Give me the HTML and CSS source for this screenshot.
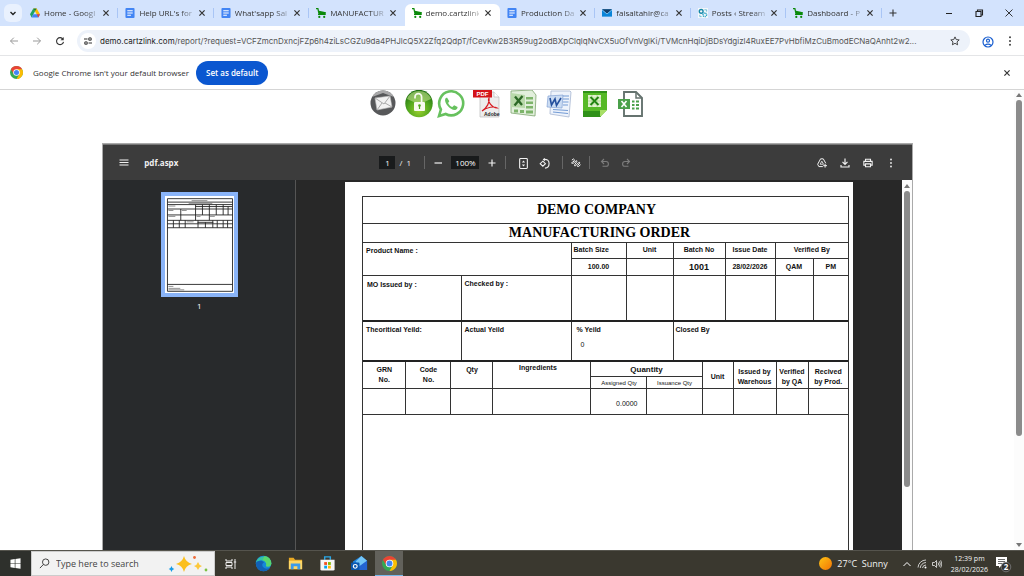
FILE: index.html
```html
<!DOCTYPE html>
<html lang="en">
<head>
<meta charset="utf-8">
<title>demo.cartzlink.com</title>
<link rel="stylesheet" href="styles.css">
</head>
<body>
<svg class="defs" aria-hidden="true">
  <symbol id="close" viewBox="0 0 10 10"><path d="M2.400 2.400l5.200 5.200M7.600 2.400L2.400 7.600" fill="none" stroke="currentColor" stroke-width="1.200"/></symbol>
  <symbol id="doc" viewBox="0 0 10 11"><rect width="10" height="11" rx="1" fill="#4285f4"/><path d="M2 3h6M2 5.500h6M2 8h4" stroke="#fff" stroke-width="1.200"/></symbol>
  <symbol id="cart" viewBox="0 0 10 10"><path d="M0 0h2.400l.6 2.800L10 4.200 9.400 7H2.600L1.400 1.300H0z" fill="#0b8a0b"/><path d="M2 6.500h7.500" stroke="#0b8a0b" stroke-width="1"/><circle cx="3.300" cy="8.900" r="1.100" fill="#0b8a0b"/><circle cx="8.200" cy="8.900" r="1.100" fill="#0b8a0b"/></symbol>
  <symbol id="chrome" viewBox="0 0 20 20"><circle cx="10" cy="10" r="10" fill="#34a853"/><path d="M1.340 5A10 10 0 0 1 18.660 5L10 10z" fill="#ea4335"/><path d="M1.340 5L6 13l4-3 8-5H10z" fill="#ea4335"/><path d="M18.660 5A10 10 0 0 1 10 20l4.300-7.500L10 5z" fill="#fbbc04"/><circle cx="10" cy="10" r="5" fill="#fff"/><circle cx="10" cy="10" r="3.900" fill="#4285f4"/></symbol>
</svg>

<header class="browser">
  <div class="tabstrip">
    <button class="tab-search" aria-label="Search tabs"><svg viewBox="0 0 10 10"><path d="M2.500 4L5 6.500 7.500 4" fill="none" stroke="#222" stroke-width="1.400"/></svg></button>
    <nav class="tabs" aria-label="Tabs">
      <div class="tab"><svg class="favicon" viewBox="0 0 12 11"><path d="M4 0h4l4 7H8z" fill="#fbbc04"/><path d="M4 0l2 3.500L2 11 0 7z" fill="#1fa463"/><path d="M3.800 7H12l-2 4H2z" fill="#4285f4"/><path d="M4 0h4L6 3.500z" fill="#188038"/><path d="M8 7h4l-2 4z" fill="#ea4335"/></svg><span class="tab-title">Home - Googl</span><button class="tab-close" aria-label="Close"><svg><use href="#close"/></svg></button></div>
      <div class="tab"><svg class="favicon"><use href="#doc"/></svg><span class="tab-title">Help URL's for</span><button class="tab-close" aria-label="Close"><svg><use href="#close"/></svg></button></div>
      <div class="tab"><svg class="favicon"><use href="#doc"/></svg><span class="tab-title">What'sapp Sal</span><button class="tab-close" aria-label="Close"><svg><use href="#close"/></svg></button></div>
      <div class="tab"><svg class="favicon"><use href="#cart"/></svg><span class="tab-title">MANUFACTUR</span><button class="tab-close" aria-label="Close"><svg><use href="#close"/></svg></button></div>
      <div class="tab tab-active"><svg class="favicon"><use href="#cart"/></svg><span class="tab-title">demo.cartzlink</span><button class="tab-close" aria-label="Close"><svg><use href="#close"/></svg></button></div>
      <div class="tab"><svg class="favicon"><use href="#doc"/></svg><span class="tab-title">Production Da</span><button class="tab-close" aria-label="Close"><svg><use href="#close"/></svg></button></div>
      <div class="tab"><svg class="favicon" viewBox="0 0 11 10"><rect y="1" width="11" height="8" fill="#0a84d8"/><path d="M0 1h11L5.500 6z" fill="#123f6b"/><path d="M0 1.500L5.500 6 11 1.500" fill="none" stroke="#9fd8ff" stroke-width=".8"/></svg><span class="tab-title">faisaltahir@ca</span><button class="tab-close" aria-label="Close"><svg><use href="#close"/></svg></button></div>
      <div class="tab"><svg class="favicon" viewBox="0 0 11 11"><rect width="11" height="11" fill="#f4f8fb"/><circle cx="3.500" cy="3.700" r="2.100" fill="none" stroke="#1687a8" stroke-width="1.500"/><circle cx="7.500" cy="7.500" r="2" fill="none" stroke="#2ba3c5" stroke-width="1.500" stroke-dasharray="1.200 .6"/><path d="M7 2h2.500v2M2 7.500v2h2" fill="none" stroke="#66bcd5"/></svg><span class="tab-title">Posts ‹ Stream</span><button class="tab-close" aria-label="Close"><svg><use href="#close"/></svg></button></div>
      <div class="tab"><svg class="favicon"><use href="#cart"/></svg><span class="tab-title">Dashboard - P</span><button class="tab-close" aria-label="Close"><svg><use href="#close"/></svg></button></div>
    </nav>
    <button class="icon-button new-tab" aria-label="New tab"><svg viewBox="0 0 10 10"><path d="M5 1.500v7M1.500 5h7" stroke="#333" stroke-width="1.100"/></svg></button>
    <div class="window-controls">
      <button class="icon-button" aria-label="Minimize"><svg viewBox="0 0 10 10"><path d="M2 5.500h6" stroke="#222"/></svg></button>
      <button class="icon-button" aria-label="Restore"><svg viewBox="0 0 10 10"><path d="M2 3.500h5V8.500H2zM3.500 3.500V2h5v5H7" fill="none" stroke="#222" stroke-width="1.100"/></svg></button>
      <button class="icon-button" aria-label="Close window"><svg viewBox="0 0 10 10"><path d="M1.500 1.500l7 7M8.500 1.500l-7 7" stroke="#222" stroke-width=".9"/></svg></button>
    </div>
  </div>

  <div class="toolbar">
    <div class="nav-buttons">
      <button class="icon-button muted" aria-label="Back"><svg viewBox="0 0 10 10"><path d="M9 5H1.500M4.800 1.700L1.500 5l3.300 3.300" fill="none" stroke="currentColor"/></svg></button>
      <button class="icon-button muted" aria-label="Forward"><svg viewBox="0 0 10 10"><path d="M1 5h7.500M5.200 1.700L8.500 5 5.200 8.300" fill="none" stroke="currentColor"/></svg></button>
      <button class="icon-button" aria-label="Reload"><svg viewBox="0 0 10 10"><path d="M8 3.200A3.500 3.500 0 1 0 8.500 5.800" fill="none" stroke="#333" stroke-width="1.100"/><path d="M8.700 1v3.200H5.500z" fill="#333"/></svg></button>
    </div>
    <div class="omnibox">
      <button class="site-info" aria-label="Site information"><svg viewBox="0 0 10 10"><path d="M1 3h3.500M5.500 7H9" stroke="#333" stroke-width="1.100"/><circle cx="7" cy="3" r="1.300" fill="none" stroke="#333" stroke-width="1.100"/><circle cx="3" cy="7" r="1.300" fill="none" stroke="#333" stroke-width="1.100"/></svg></button>
      <div class="url" role="textbox" aria-label="Address"><span class="host">demo.cartzlink.com</span>/report/?request=VCFZmcnDxncjFZp6h4ziLsCGZu9da4PHJlcQ5X2Zfq2QdpT/fCevKw2B3R59ug2odBXpClqlqNvCX5uOfVnVglKi/TVMcnHqiDjBDsYdgizl4RuxEE7PvHbfiMzCuBmodECNaQAnht2w2...</div>
      <button class="icon-button" aria-label="Bookmark"><svg viewBox="0 0 10 10"><path d="M5 .9l1.250 2.700 2.950.3-2.200 2 .6 2.900L5 7.300 2.400 8.800 3 5.900l-2.200-2 2.950-.3z" fill="none" stroke="#333" stroke-width=".9"/></svg></button>
    </div>
    <div class="profile-buttons">
      <button class="icon-button profile" aria-label="Profile"><svg viewBox="0 0 12 12"><circle cx="6" cy="6" r="5" fill="none" stroke="#1a5fd0" stroke-width="1.200"/><circle cx="6" cy="4.700" r="1.500" fill="none" stroke="#1a5fd0" stroke-width="1.200"/><path d="M2.800 9.400q3.200-2.600 6.400 0" fill="none" stroke="#1a5fd0" stroke-width="1.200"/></svg></button>
      <button class="icon-button" aria-label="Menu"><svg viewBox="0 0 10 10"><g fill="#333"><circle cx="5" cy="1.300" r=".95"/><circle cx="5" cy="5" r=".95"/><circle cx="5" cy="8.700" r=".95"/></g></svg></button>
    </div>
  </div>

  <div class="infobar">
    <svg class="chrome-logo"><use href="#chrome"/></svg>
    <span>Google Chrome isn't your default browser</span>
    <button class="default-button">Set as default</button>
    <button class="icon-button infobar-close" aria-label="Dismiss"><svg><use href="#close"/></svg></button>
  </div>
</header>

<main class="viewport">
  <div class="web-page">
    <div class="export-row">
      <button class="export email" aria-label="Email"><svg viewBox="0 0 28 28"><circle cx="14" cy="13" r="12.500" fill="#57585a"/><path d="M3 7a12.500 12.500 0 0 1 22 0L14 3z" fill="#a9a9aa"/><path d="M6 8l15-2 2 11-15 3z" fill="#f2f2f2" stroke="#bbb" stroke-width=".6"/><path d="M6 8l9 6 6-8M8 20l5-7M23 17l-7-4" fill="none" stroke="#aaa"/></svg></button>
      <button class="export" aria-label="Unlock"><svg viewBox="0 0 28 28"><defs><radialGradient id="lock" cx=".5" cy=".75" r=".75"><stop offset="0" stop-color="#9bd02e"/><stop offset=".55" stop-color="#4fa51d"/><stop offset="1" stop-color="#1c6d12"/></radialGradient></defs><circle cx="14" cy="13.500" r="13.700" fill="url(#lock)"/><path d="M2 9a13 13 0 0 1 24 0q-12 7-24 0z" fill="#b7d982" opacity=".65"/><rect x="9" y="12" width="11" height="9" rx="1" fill="#f7faef"/><path d="M10 8.500V7a3.300 3.300 0 0 1 6.600 0V12" fill="none" stroke="#f7faef" stroke-width="1.700"/><circle cx="14.500" cy="15.500" r="1.300" fill="#4fa51d"/><path d="M14.500 16v3" stroke="#4fa51d" stroke-width="1.200"/></svg></button>
      <button class="export" aria-label="WhatsApp"><svg viewBox="0 0 28 28"><path d="M2 26l1.900-6.500A12 12 0 1 1 8.700 24z" fill="#fff" stroke="#67c15e" stroke-width="2.600"/><path d="M10 7.500l-1.700.9c-1.700 4 4.700 11.700 9.700 11.600 1.500-.2 2.500-1.200 2.600-3l-3.500-1.800-1.700 1.900c-2-.7-3.500-2.300-4.300-4.200l1.200-1.600z" fill="#67c15e"/></svg></button>
      <button class="export wide" aria-label="PDF"><svg viewBox="0 0 28 28"><path d="M7 2h14l5 5v20H7z" fill="#ededed" stroke="#bbb" stroke-width=".7"/><path d="M21 2v5h5" fill="#fff" stroke="#bbb" stroke-width=".7"/><path d="M9 21c5-3 8-9 7-13-2 3 3 10 8 10-3-2-10-1-15 3z" fill="none" stroke="#d71920" stroke-width="1.200"/><rect x="0" width="19" height="7.500" fill="#d4141a"/><text x="3.500" y="6" class="art-pdf">PDF</text><text x="11" y="25.500" class="art-adobe">Adobe</text></svg></button>
      <button class="export wide" aria-label="Excel"><svg viewBox="0 0 28 28"><path d="M2 1l21-1 4 5-1 21-24-3z" fill="#e2efdc" stroke="#7da56f" stroke-width=".8"/><path d="M17 7h7v2.500h-7zM17 11.500h7v2.500h-7zM17 16h7v2.500h-7zM5 19.500h4v3H5zM11 20h4v3h-4zM17 20.500h7v3h-7z" fill="#7db46a"/><path d="M2 3l14 2v13L2 17z" fill="#b9d9aa"/><path d="M6 6.500l7 8.500M13.500 6L5.500 15.500" stroke="#2c6826" stroke-width="2.300"/></svg></button>
      <button class="export wide" aria-label="Word"><svg viewBox="0 0 28 28"><path d="M6 1h19l1 1-2 25-19-3z" fill="#eef3fb" stroke="#a7b6d2" stroke-width=".8"/><path d="M18 6h6M18 9h6M18 12h5.500M18 15h5M8 19.500l15 1M8 22l15 1.500" stroke="#739bd5" stroke-width="1.200"/><path d="M3 6l15-1-1 13-15-1z" fill="#cbdcf3" stroke="#7597ce" stroke-width=".6"/><path d="M5 8l1.500 7L10 9l1.500 6.500L16 8" fill="none" stroke="#244f9d" stroke-width="1.600"/></svg></button>
      <button class="export wide" aria-label="Spreadsheet"><svg viewBox="0 0 28 28"><path d="M2 1h24v19l-7 7H2z" fill="#56b927"/><path d="M2 1h24v2H2zM2 21h18v6H2z" fill="#2f9119"/><path d="M26 20l-7 7v-7z" fill="#a8df66"/><path d="M7 5h13v12H7z" fill="#dff1cf"/><path d="M7 8h13M7 11h13M7 14h13M11 5v12M16 5v12" stroke="#abd48b" stroke-width=".7"/><path d="M9.500 7l8 8M17.500 7l-8 8" stroke="#218411" stroke-width="1.800"/></svg></button>
      <button class="export wide" aria-label="Excel file"><svg viewBox="0 0 28 28"><path d="M7 2h12l6 6v18H7z" fill="#fff" stroke="#65736f" stroke-width="1.900"/><path d="M19 2v6h6" fill="none" stroke="#65736f" stroke-width="1.500"/><rect x="1" y="9" width="12" height="10" fill="#4aa04a"/><path d="M4.500 11l5 6M9.500 11l-5 6" stroke="#fff" stroke-width="1.600"/><path d="M15 11.500h2.500M19 11.500h3M15 15h2.500M19 15h3M15 18.500h2.500M19 18.500h3" stroke="#4aa04a" stroke-width="2"/></svg></button>
    </div>

    <section class="pdf-viewer">
      <div class="pdf-toolbar">
        <div class="pdf-name"><button class="icon-button" aria-label="Menu"><svg viewBox="0 0 10 10"><path d="M.5 2h9M.5 4.500h9M.5 7h9" stroke="currentColor" stroke-width="1.100"/></svg></button><strong>pdf.aspx</strong></div>
        <div class="pdf-tools">
          <input class="page-input" value="1" aria-label="Page"><span class="page-count">/&nbsp; 1</span>
          <i class="sep"></i>
          <button class="icon-button" aria-label="Zoom out"><svg viewBox="0 0 10 10"><path d="M1.500 5h7.500" stroke="currentColor" stroke-width="1.200"/></svg></button>
          <input class="zoom-input" value="100%" aria-label="Zoom">
          <button class="icon-button" aria-label="Zoom in"><svg viewBox="0 0 10 10"><path d="M1.500 5h7M5 1.500v7" stroke="currentColor" stroke-width="1.200"/></svg></button>
          <i class="sep"></i>
          <div class="view-tools">
            <button class="icon-button" aria-label="Fit to page"><svg viewBox="0 0 10 10"><rect x="1.500" y=".5" width="7" height="9" rx=".8" fill="none" stroke="currentColor"/><path d="M3.500 4L5 2.300 6.500 4zM3.500 6L5 7.700 6.500 6z" fill="currentColor"/></svg></button>
            <button class="icon-button" aria-label="Rotate"><svg viewBox="0 0 12 12"><path d="M4.200 3.500L7 6.200 4.200 9 1.300 6.200z" fill="none" stroke="currentColor" stroke-width="1.200"/><path d="M5 1.500q6-.5 6 4.500T6.500 11" fill="none" stroke="currentColor" stroke-width="1.200"/><path d="M6.500 0v3.500L4 1.700z" fill="currentColor"/></svg></button>
          </div>
          <i class="sep"></i>
          <button class="icon-button" aria-label="Draw"><svg viewBox="0 0 12 12"><path d="M1 2.500Q3.500 0 4 2T1.800 5 2.500 6.500L6 3.500q1.500-.8 1 .8L4.500 8q-.8 2 .8 1.500L9 5.500q1.800-1 1.500.5L8 9q-.5 2 1 1.200L11.500 8" fill="none" stroke="currentColor" stroke-width="1.200"/></svg></button>
          <i class="sep"></i>
          <button class="icon-button dim undo" aria-label="Undo"><svg viewBox="0 0 10 10"><path d="M4 1L1.500 3.500 4 6M1.500 3.500H6a2.400 2.400 0 0 1 0 4.800H2.500" fill="none" stroke="currentColor" stroke-width="1.100"/></svg></button>
          <button class="icon-button dim redo" aria-label="Redo"><svg viewBox="0 0 10 10"><path d="M6 1l2.500 2.500L6 6M8.500 3.500H4a2.400 2.400 0 0 0 0 4.800h3.500" fill="none" stroke="currentColor" stroke-width="1.100"/></svg></button>
        </div>
        <div class="pdf-actions">
          <button class="icon-button" aria-label="Save to Drive"><svg viewBox="0 0 12 12"><path d="M4.300 1h3.200l3 5.300M7 10.300H2.200L.8 7.500 4.300 1" fill="none" stroke="currentColor" stroke-width="1.200"/><path d="M5.800 3.800l2 3.700H3.800z" fill="none" stroke="currentColor"/><path d="M9.700 7v4.500M7.500 9.200H12" stroke="currentColor" stroke-width="1.200"/></svg></button>
          <button class="icon-button" aria-label="Download"><svg viewBox="0 0 10 10"><path d="M5 .5V6M2.500 3.800L5 6.300l2.500-2.500M1 7v2h8V7" fill="none" stroke="currentColor" stroke-width="1.200"/></svg></button>
          <button class="icon-button" aria-label="Print"><svg viewBox="0 0 12 12"><path d="M3 4V1.500h6V4M3 8.500H1V4h10v4.500H9M3 7h6v3.500H3z" fill="none" stroke="currentColor" stroke-width="1.300"/></svg></button>
          <button class="icon-button" aria-label="More"><svg viewBox="0 0 10 10"><g fill="currentColor"><circle cx="5" cy="1.500" r=".9"/><circle cx="5" cy="5" r=".9"/><circle cx="5" cy="8.500" r=".9"/></g></svg></button>
        </div>
      </div>

      <div class="pdf-body">
        <aside class="thumbnails">
          <button class="thumb" aria-label="Page 1"><svg viewBox="0 0 70 98"><rect width="70" height="98" fill="#fff"/><g fill="none" stroke="#222" stroke-width=".9"><path d="M2.500 2.500h66v94h-66zM2.500 6h66M2.500 8.500h66M31 10.500h37M2.500 13h66M2.500 19h66M2.500 24.500h66M33 26.500h16M2.500 28h66M2.500 32h66M2.500 89.500h66"/><path d="M16 13v11.500M31 8.500v16M38 8.500V19M45 8.500v16M52 8.500V19M59 8.500V19M64 10.500V19M8.500 24.500V32M14.500 24.500V32M20.500 24.500V32M33.500 24.500V32M41 26.500V32M48.500 24.500V32M53 24.500V32M59 24.500V32M63.500 24.500V32"/></g><path d="M27 4.500h16M24 7.300h24M3.500 10h7M3.500 14.500h5M17 14.500h5M3.500 20.500h7M32 20.500h4M45.500 20.500h5M22 26h7M3.500 91.500h5M3.500 93.500h12M3.500 95h16" stroke="#777" stroke-width=".8"/></svg></button>
          <span>1</span>
        </aside>
        <div class="page-area">
          <article class="sheet">
            <div class="form-frame">
              <h1>DEMO COMPANY</h1>
              <h2>MANUFACTURING ORDER</h2>
              <table class="order">
                <colgroup><col class="w99"><col class="w109"><col class="w55"><col class="w47"><col class="w52"><col class="w50"><col class="w38"><col></colgroup>
                <tr class="row-label"><td colspan="2" rowspan="2">Product Name :</td><th class="batch">Batch Size</th><th>Unit</th><th>Batch No</th><th>Issue Date</th><th colspan="2">Verified By</th></tr>
                <tr class="row-value"><th>100.00</th><th></th><th class="large">1001</th><th>28/02/2026</th><th>QAM</th><th>PM</th></tr>
                <tr class="row-sign"><td class="low">MO Issued by :</td><td>Checked by :</td><td></td><td></td><td></td><td></td><td></td><td></td></tr>
                <tr class="row-yield"><td>Theoritical Yeild:</td><td>Actual Yeild</td><td colspan="2" class="yield">% Yeild<span>0</span></td><td colspan="4">Closed By</td></tr>
              </table>
              <table class="items">
                <colgroup><col class="w43"><col class="w45"><col class="w42"><col class="w98"><col class="w56"><col class="w55"><col class="w31"><col class="w43"><col class="w32"><col></colgroup>
                <tr class="row-group"><th rowspan="2" class="top">GRN<br>No.</th><th rowspan="2" class="top">Code<br>No.</th><th rowspan="2" class="top">Qty</th><th rowspan="2" class="name">Ingredients</th><th colspan="2" class="quantity">Quantity</th><th rowspan="2">Unit</th><th rowspan="2">Issued by<br>Warehous</th><th rowspan="2">Verified<br>by QA</th><th rowspan="2">Recived<br>by Prod.</th></tr>
                <tr class="row-sub"><th>Assigned Qty</th><th>Issuance Qty</th></tr>
                <tr class="row-item"><td></td><td></td><td></td><td></td><td class="amount">0.0000</td><td></td><td></td><td></td><td></td><td></td></tr>
              </table>
            </div>
          </article>
        </div>
        <div class="scrollbar pdf-scroll"><i class="arrow-up"></i><i class="thumb-bar"></i></div>
      </div>
    </section>
  </div>
  <div class="scrollbar page-scroll"><i class="arrow-up"></i><i class="thumb-bar"></i><i class="arrow-down"></i></div>
</main>

<footer class="taskbar">
  <button class="start" aria-label="Start"><svg viewBox="0 0 12 12"><path d="M.5 1.800l4.700-.6v4.500H.5zM5.900 1.100L11.500.3v5.400H5.900zM.5 6.400h4.700v4.500l-4.700-.7zM5.900 6.400h5.600v5.400l-5.600-.8z" fill="#fff"/></svg></button>
  <label class="search"><svg class="lens" viewBox="0 0 12 12"><circle cx="7.300" cy="4.500" r="3.500" fill="none" stroke="#333"/><path d="M4.800 7.100L1 11" stroke="#333"/></svg><input type="text" placeholder="Type here to search" aria-label="Type here to search"><svg class="sparkles" viewBox="0 0 40 18"><path d="M16 1q1.500 6 8 8-6.500 1.500-8 8-1.500-6.500-8-8 6.500-2 8-8z" fill="#fbbf1d"/><path d="M30 7q.8 3 4 4-3.200.8-4 4-.8-3.200-4-4 3.200-1 4-4z" fill="#fdc83b"/><path d="M3.500 11q.5 2.300 2.800 3-2.300.7-2.800 3-.6-2.300-2.800-3 2.200-.7 2.800-3z" fill="#139be8"/><circle cx="26.500" cy="2.500" r="1.400" fill="#ee6a38"/><circle cx="38" cy="15" r="1.400" fill="#7cc142"/></svg></label>
  <div class="apps">
    <button aria-label="Task view"><svg class="small" viewBox="0 0 12 12"><path d="M1 1v2h6V1M1 11V9h6v2M1 4.500h6v3H1zM10 1v10M8.800 4h2.400" fill="none" stroke="#eee"/></svg></button>
    <button aria-label="Edge"><svg viewBox="0 0 18 18"><circle cx="9" cy="9" r="8.200" fill="#1688d8"/><path d="M1 8A8.300 8.300 0 0 1 17.300 9c0 3-3.500 4-5.800 2.700C13 9 10.500 5.500 7 5.500 4 5.500 2 6.500 1 8z" fill="#35c3a2"/><path d="M10 1q7 1 7.300 8c0 3-3.500 4-5.800 2.700C13 9 11 6 8 5.500z" fill="#58d66f"/><path d="M1 8.500C3 5.500 8 5.200 9.500 8 6.500 9 7 14 12.500 14.500q2 0 3.500-1.200C12 19.500 1 18.500 1 8.500z" fill="#1261b5"/></svg></button>
    <button aria-label="File Explorer"><svg viewBox="0 0 18 18"><path d="M2 3h5l1.500 2H16v10H2z" fill="#e9a923"/><path d="M2 6h14v9H2z" fill="#ffd764"/><path d="M4 9h10v6h-3v-3H7v3H4z" fill="#3e9be8"/></svg></button>
    <button aria-label="Store"><svg viewBox="0 0 18 18"><path d="M6 5V2h6v3" fill="none" stroke="#2aa8e8" stroke-width="1.500"/><path d="M1.500 5h15v10q0 1.500-1.500 1.500H3q-1.500 0-1.500-1.500z" fill="#f5f5f5"/><path d="M5.500 7.500h3v3h-3z" fill="#f25022"/><path d="M9.500 7.500h3v3h-3z" fill="#7fba00"/><path d="M5.500 11.300h3v3h-3z" fill="#00a4ef"/><path d="M9.500 11.300h3v3h-3z" fill="#ffb900"/></svg></button>
    <button aria-label="Outlook"><svg viewBox="0 0 18 18"><path d="M2 7l9-6 6 5v10H3z" fill="#1c83df"/><path d="M5 7l6-6 6 5-8 7z" fill="#73c5f7"/><path d="M3 16l14-10v10z" fill="#2364d2"/><rect y="8" width="9" height="8" rx="1" fill="#0a57ad"/><circle cx="4.500" cy="12" r="2" fill="none" stroke="#fff" stroke-width="1.200"/></svg></button>
    <button class="running" aria-label="Chrome"><svg class="chrome-task"><use href="#chrome"/></svg></button>
  </div>
  <div class="tray">
    <span class="sun"></span>
    <span class="weather">27°C&nbsp; Sunny</span>
    <svg class="tray-icon" viewBox="0 0 10 10"><path d="M1.500 7L5 3.500 8.500 7" fill="none" stroke="#fff"/></svg>
    <svg class="tray-icon" viewBox="0 0 10 10"><path d="M1 8.500a8 8 0 0 1 8-7.500M3.200 9a6 6 0 0 1 5.800-5.500M5.500 9A3.500 3.500 0 0 1 9 6" fill="none" stroke="#ddd" stroke-width=".9"/><circle cx="8.500" cy="8.500" r="1" fill="#fff"/></svg>
    <svg class="tray-icon" viewBox="0 0 10 10"><path d="M.5 3.500h2L4.500 1.500v7l-2-2h-2zM6 3.500q1.200 1.500 0 3M7.300 2.300q2 2.700 0 5.400M8.700 1.300q2.300 3.700 0 7.400" fill="none" stroke="#eee" stroke-width=".8"/></svg>
    <time class="clock">12:39 pm<br>28/02/2026</time>
    <svg class="notice" viewBox="0 0 18 18"><path d="M2 2h11v9H7l-2 2v-2H2z" fill="#fff"/><path d="M4 4.500h7M4 6.500h7M4 8.500h4" stroke="#444" stroke-width=".8"/><circle cx="12" cy="12" r="4.800" fill="#333" stroke="#888" stroke-width=".7"/><text x="9.800" y="15" class="art-count">2</text></svg>
  </div>
</footer>
</body>
</html>
```
FILE: styles.css
```css
* { box-sizing: border-box; }
body {
  margin: 0;
  height: 100vh;
  display: flex;
  flex-direction: column;
  overflow: hidden;
  background: #fff;
  color: #333;
  font: 8px/12px "Open Sans", "Noto Sans", sans-serif;
}
button { border: 0; padding: 0; margin: 0; background: none; color: inherit; font: inherit; }
svg { display: block; }
.defs { position: absolute; width: 0; height: 0; }
.icon-button { flex: none; width: 10px; height: 10px; display: grid; place-items: center; }
.icon-button svg { width: 10px; height: 10px; }

/* browser chrome */
.browser { flex: none; }
.tabstrip { display: flex; align-items: center; height: 26px; padding: 0 10px 0 4px; background: #d3e3fd; }
.tab-search { flex: none; width: 18px; height: 18px; margin-right: 1px; border-radius: 6px; background: #e9f1fe; display: grid; place-items: center; }
.tab-search svg { width: 10px; height: 10px; }
.tabs { flex: 0 1 85%; min-width: 0; display: flex; align-self: stretch; }
.tab { position: relative; flex: 1 1 0; min-width: 0; display: flex; align-items: center; gap: 4px; padding: 0 7px; }
.tab::after { content: ""; position: absolute; right: 0; top: 8px; width: 1px; height: 10px; background: #a9c5f5; }
.tab-active::before { content: ""; position: absolute; inset: 4px 0 0; border-radius: 6px 6px 0 0; background: #fff; }
.tab-active::after, .tab:has(+ .tab-active)::after { display: none; }
.tab > * { position: relative; }
.favicon { flex: none; width: 10px; height: 10px; }
.tab-title { flex: 1; min-width: 0; white-space: nowrap; mask-image: linear-gradient(90deg, #000 75%, #0004); }
.tab-close { flex: none; width: 10px; height: 10px; }
.tab-close svg { width: 10px; height: 10px; }
.new-tab { margin-left: 6px; }
.window-controls { display: flex; gap: 20px; margin-left: auto; }

.toolbar { display: flex; align-items: center; height: 30px; padding: 0 9px; gap: 12px; border-bottom: 1px solid #e4e5e7; }
.nav-buttons { display: flex; gap: 13px; }
.muted { color: #999; }
.omnibox { flex: 1; min-width: 0; display: flex; align-items: center; height: 22px; padding: 0 10px 0 3px; border-radius: 11px; background: #edf2fa; }
.site-info { flex: none; width: 16px; height: 16px; border-radius: 8px; background: #fff; display: grid; place-items: center; }
.site-info svg { width: 10px; height: 10px; }
.url { flex: 1; min-width: 0; margin: 0 10px 0 4px; white-space: nowrap; font-family: Inter, "Open Sans", sans-serif; font-size: 8px; color: #555; }
.host { color: #222; }
.profile-buttons { display: flex; gap: 13px; }
.profile svg { width: 12px; height: 12px; }

.infobar { display: flex; align-items: center; gap: 7px; height: 34px; padding: 0 12px 0 10px; border-bottom: 1px solid #d5d5d5; }
.chrome-logo { width: 13px; height: 13px; margin-right: 3px; }
.default-button { height: 24px; padding: 0 10px; border-radius: 12px; background: #0b57d0; color: #fff; font-weight: 600; }
.infobar-close { margin-left: auto; }

/* web page */
.viewport { flex: 1; min-height: 0; display: flex; }
.web-page { flex: 1; min-width: 0; overflow: hidden; display: flex; flex-direction: column; align-items: center; padding-left: 1px; }
.export-row { flex: none; display: flex; gap: 4px; height: 28px; margin-bottom: 25px; padding-right: 1px; }
.export { width: 28px; height: 28px; }
.export svg { width: 28px; height: 28px; }
.email { margin-right: 4px; }
.export.wide { margin-left: 4px; }
.art-pdf { font: 700 6px "Liberation Sans", sans-serif; fill: #fff; }
.art-adobe { font: 700 5px "Liberation Sans", sans-serif; fill: #222; }
.art-count { font: 700 8px "Open Sans", sans-serif; fill: #fff; }

.scrollbar { flex: none; display: flex; flex-direction: column; align-items: center; background: #fcfcfc; }
.arrow-up { border: 3px solid transparent; border-top: 0; border-bottom: 4px solid #777; }
.arrow-down { border: 3px solid transparent; border-bottom: 0; border-top: 4px solid #777; margin-top: auto; }
.thumb-bar { width: 6px; border-radius: 3px; background: #8b8b8b; }
.page-scroll { width: 10px; padding: 3px 0; gap: 3px; }
.page-scroll .thumb-bar { height: 74%; }

/* pdf viewer */
.pdf-viewer { flex: 1; width: 80%; min-height: 0; display: flex; flex-direction: column; border: 1px solid #aaa; border-bottom: 0; }
.pdf-toolbar { flex: none; display: grid; grid-template-columns: 1fr auto 1fr; align-items: center; height: 36px; padding: 0 16px; background: #3c3c3c; color: #f1f1f1; border-top: 1px solid #777; }
.pdf-name { display: flex; align-items: center; gap: 15px; }
.pdf-tools { display: flex; align-items: center; gap: 8px; padding-right: 4px; }
.page-input, .zoom-input { height: 13px; padding: 0; border: 0; background: #191b1c; color: #fff; text-align: center; font: 8px/12px "Open Sans", sans-serif; }
.page-input { width: 16px; }
.zoom-input { width: 28px; }
.page-count { width: 17px; margin-left: -4px; }
.sep { width: 1px; height: 13px; background: #666; }
.view-tools { display: flex; gap: 11px; padding: 0 5px 0 4px; }
.view-tools svg { width: 11px; height: 11px; }
.dim { color: #7d7d7d; }
.undo { margin-left: 2px; }
.redo { margin-left: 3px; }
.pdf-actions { display: flex; justify-content: flex-end; gap: 13px; }
.pdf-body { flex: 1; min-height: 0; display: flex; background: #282828; }
.thumbnails { flex: none; width: 193px; padding-top: 12px; background: #282a2c; border-right: 1px solid #555; display: flex; flex-direction: column; align-items: center; gap: 3px; color: #fff; }
.thumb { border: 4px solid #8ab4f8; background: #fff; }
.thumb svg { width: 69px; height: 97px; }
.page-area { flex: 1; min-width: 0; overflow: hidden; display: flex; justify-content: center; padding-top: 2px; }
.sheet { flex: none; width: 508px; height: 718px; padding: 14px 4px 30px 17px; background: #fff; color: #111; font-family: "Liberation Sans", sans-serif; }
.pdf-scroll { width: 10px; padding: 4px 0; gap: 3px; }
.pdf-scroll .thumb-bar { height: 296px; }

/* manufacturing order form */
.form-frame { height: 100%; border: 1px solid #333; }
.form-frame h1, .form-frame h2 { margin: 0; border-bottom: 1px solid #333; text-align: center; color: #000; font-family: "Liberation Serif", serif; font-size: 14px; }
.form-frame h1 { line-height: 26px; padding-right: 18px; }
.form-frame h2 { line-height: 18px; padding-right: 12px; }
table { width: 100%; table-layout: fixed; border-collapse: collapse; font-size: 7px; line-height: 10px; font-weight: 700; }
td, th { border: 1px solid #333; padding: 0; text-align: center; white-space: nowrap; }
td { text-align: left; vertical-align: top; padding: 3px 0 0 2px; }
tr > :first-child { border-left: 0; }
tr > td:first-child { padding-left: 3px; }
tr > :last-child { border-right: 0; }
.row-value > :first-child { border-left: 1px solid #333; }
.row-sub > * { border: 1px solid #333; }
.row-label > * { border-top: 0; }
.row-label { height: 15px; }
.row-value { height: 17px; }
.row-sign { height: 46px; }
.row-yield { height: 40px; }
.row-yield > * { border-top: 2px solid #222; border-bottom: 2px solid #222; }
.batch { text-align: left; padding-left: 2px; }
tr > td.low { padding-top: 4px; padding-left: 4px; }
.large { font-size: 9px; }
.yield { padding-left: 5px; }
.yield span { display: block; margin: 5px 0 0 4px; font-weight: 400; }
.row-group { height: 14px; }
.row-group > * { border-top: 0; padding-top: 4px; }
.row-sub { height: 11px; font-size: 6px; }
.row-sub > * { font-weight: 400; padding-top: 1px; }
.row-item { height: 26px; }
.row-group .top { vertical-align: top; padding-top: 3px; }
.row-group .name { vertical-align: top; padding: 1px 8px 0 0; }
.row-group .quantity { font-size: 8px; padding-top: 3px; }
.amount { text-align: right; font-weight: 400; padding: 10px 9px 0 0; }
.w98 { width: 98px; } .w99 { width: 99px; } .w109 { width: 109px; } .w55 { width: 55px; } .w47 { width: 47px; }
.w52 { width: 52px; } .w50 { width: 50px; } .w38 { width: 38px; } .w43 { width: 43px; }
.w45 { width: 45px; } .w42 { width: 42px; } .w56 { width: 56px; } .w31 { width: 31px; } .w32 { width: 32px; }

/* taskbar */
.taskbar { flex: none; display: flex; height: 26px; background: #3a382f; color: #f3f3f3; border-top: 1px solid #55544d; }
.start { flex: none; width: 31px; display: grid; place-items: center; background: #2e302c; }
.start svg { width: 11px; height: 11px; }
.search { flex: none; width: 184px; display: flex; align-items: center; padding: 0 6px 0 7px; background: #f2f2f2; border: 1px solid #ccc; }
.lens { width: 11px; height: 11px; margin-right: 6px; }
.search input { flex: 1; min-width: 0; border: 0; padding: 0; background: none; font: 9px/14px "Open Sans", sans-serif; }
.search input::placeholder { color: #444; opacity: 1; }
.sparkles { width: 40px; height: 18px; }
.apps { display: flex; }
.apps button { width: 32px; display: grid; place-items: center; }
.apps svg { width: 17px; height: 17px; }
.apps .small { width: 12px; height: 12px; }
.apps .running { width: 28px; background: #62615b; border-bottom: 1px solid #76b9ed; }
.apps .chrome-task { width: 15px; height: 15px; }
.tray { display: flex; align-items: center; margin-left: auto; padding-right: 12px; gap: 5px; }
.sun { width: 13px; height: 13px; border-radius: 50%; background: linear-gradient(135deg, #ffc414, #f27405); }
.weather { font-size: 9px; margin-right: 9px; }
.tray-icon { width: 10px; height: 10px; }
.clock { font-size: 7px; line-height: 11px; text-align: center; margin: 0 1px 0 4px; }
.notice { width: 18px; height: 18px; }
```
